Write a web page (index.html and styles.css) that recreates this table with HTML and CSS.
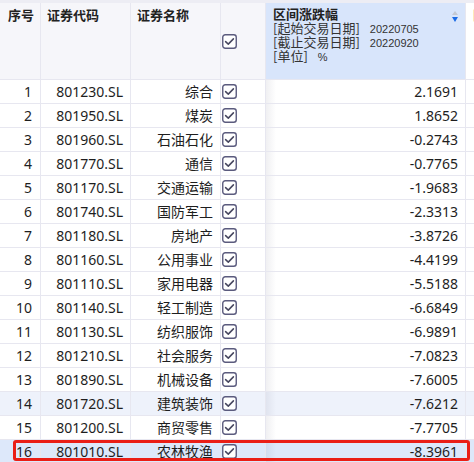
FILE: index.html
```html
<!DOCTYPE html>
<html lang="zh">
<head>
<meta charset="utf-8">
<link rel="stylesheet" href="styles.css">
</head>
<body>
<div class="sheet">
  <div class="row head">
    <div class="cell h">序号</div>
    <div class="cell h">证券代码</div>
    <div class="cell h">证券名称</div>
    <div class="cell chk hchk"><svg class="box" viewBox="0 0 15 15"><rect x="0.75" y="0.75" width="13.5" height="13.5" rx="2.5"/><polyline points="3.6,7.6 6.3,10.1 11.4,4.9"/></svg></div>
    <div class="cell hsel">
      <div class="ttl">区间涨跌幅</div>
      <div class="sub">[起始交易日期]<span class="num">20220705</span></div>
      <div class="sub">[截止交易日期]<span class="num">20220920</span></div>
      <div class="sub">[单位]<span class="num">%</span></div>
      <span class="sort up"></span><span class="sort down"></span>
    </div>
    <div class="cell h extra">区间涨跌幅</div>
  </div>
  <div class="rows">
    <div class="row"><div class="cell n">1</div><div class="cell n">801230.SL</div><div class="cell n">综合</div><div class="cell chk"><svg class="box" viewBox="0 0 15 15"><rect x="0.75" y="0.75" width="13.5" height="13.5" rx="2.5"/><polyline points="3.6,7.6 6.3,10.1 11.4,4.9"/></svg></div><div class="cell n val">2.1691</div><div class="cell"></div></div>
    <div class="row"><div class="cell n">2</div><div class="cell n">801950.SL</div><div class="cell n">煤炭</div><div class="cell chk"><svg class="box" viewBox="0 0 15 15"><rect x="0.75" y="0.75" width="13.5" height="13.5" rx="2.5"/><polyline points="3.6,7.6 6.3,10.1 11.4,4.9"/></svg></div><div class="cell n val">1.8652</div><div class="cell"></div></div>
    <div class="row"><div class="cell n">3</div><div class="cell n">801960.SL</div><div class="cell n">石油石化</div><div class="cell chk"><svg class="box" viewBox="0 0 15 15"><rect x="0.75" y="0.75" width="13.5" height="13.5" rx="2.5"/><polyline points="3.6,7.6 6.3,10.1 11.4,4.9"/></svg></div><div class="cell n val">-0.2743</div><div class="cell"></div></div>
    <div class="row"><div class="cell n">4</div><div class="cell n">801770.SL</div><div class="cell n">通信</div><div class="cell chk"><svg class="box" viewBox="0 0 15 15"><rect x="0.75" y="0.75" width="13.5" height="13.5" rx="2.5"/><polyline points="3.6,7.6 6.3,10.1 11.4,4.9"/></svg></div><div class="cell n val">-0.7765</div><div class="cell"></div></div>
    <div class="row"><div class="cell n">5</div><div class="cell n">801170.SL</div><div class="cell n">交通运输</div><div class="cell chk"><svg class="box" viewBox="0 0 15 15"><rect x="0.75" y="0.75" width="13.5" height="13.5" rx="2.5"/><polyline points="3.6,7.6 6.3,10.1 11.4,4.9"/></svg></div><div class="cell n val">-1.9683</div><div class="cell"></div></div>
    <div class="row"><div class="cell n">6</div><div class="cell n">801740.SL</div><div class="cell n">国防军工</div><div class="cell chk"><svg class="box" viewBox="0 0 15 15"><rect x="0.75" y="0.75" width="13.5" height="13.5" rx="2.5"/><polyline points="3.6,7.6 6.3,10.1 11.4,4.9"/></svg></div><div class="cell n val">-2.3313</div><div class="cell"></div></div>
    <div class="row"><div class="cell n">7</div><div class="cell n">801180.SL</div><div class="cell n">房地产</div><div class="cell chk"><svg class="box" viewBox="0 0 15 15"><rect x="0.75" y="0.75" width="13.5" height="13.5" rx="2.5"/><polyline points="3.6,7.6 6.3,10.1 11.4,4.9"/></svg></div><div class="cell n val">-3.8726</div><div class="cell"></div></div>
    <div class="row"><div class="cell n">8</div><div class="cell n">801160.SL</div><div class="cell n">公用事业</div><div class="cell chk"><svg class="box" viewBox="0 0 15 15"><rect x="0.75" y="0.75" width="13.5" height="13.5" rx="2.5"/><polyline points="3.6,7.6 6.3,10.1 11.4,4.9"/></svg></div><div class="cell n val">-4.4199</div><div class="cell"></div></div>
    <div class="row"><div class="cell n">9</div><div class="cell n">801110.SL</div><div class="cell n">家用电器</div><div class="cell chk"><svg class="box" viewBox="0 0 15 15"><rect x="0.75" y="0.75" width="13.5" height="13.5" rx="2.5"/><polyline points="3.6,7.6 6.3,10.1 11.4,4.9"/></svg></div><div class="cell n val">-5.5188</div><div class="cell"></div></div>
    <div class="row"><div class="cell n">10</div><div class="cell n">801140.SL</div><div class="cell n">轻工制造</div><div class="cell chk"><svg class="box" viewBox="0 0 15 15"><rect x="0.75" y="0.75" width="13.5" height="13.5" rx="2.5"/><polyline points="3.6,7.6 6.3,10.1 11.4,4.9"/></svg></div><div class="cell n val">-6.6849</div><div class="cell"></div></div>
    <div class="row"><div class="cell n">11</div><div class="cell n">801130.SL</div><div class="cell n">纺织服饰</div><div class="cell chk"><svg class="box" viewBox="0 0 15 15"><rect x="0.75" y="0.75" width="13.5" height="13.5" rx="2.5"/><polyline points="3.6,7.6 6.3,10.1 11.4,4.9"/></svg></div><div class="cell n val">-6.9891</div><div class="cell"></div></div>
    <div class="row"><div class="cell n">12</div><div class="cell n">801210.SL</div><div class="cell n">社会服务</div><div class="cell chk"><svg class="box" viewBox="0 0 15 15"><rect x="0.75" y="0.75" width="13.5" height="13.5" rx="2.5"/><polyline points="3.6,7.6 6.3,10.1 11.4,4.9"/></svg></div><div class="cell n val">-7.0823</div><div class="cell"></div></div>
    <div class="row"><div class="cell n">13</div><div class="cell n">801890.SL</div><div class="cell n">机械设备</div><div class="cell chk"><svg class="box" viewBox="0 0 15 15"><rect x="0.75" y="0.75" width="13.5" height="13.5" rx="2.5"/><polyline points="3.6,7.6 6.3,10.1 11.4,4.9"/></svg></div><div class="cell n val">-7.6005</div><div class="cell"></div></div>
    <div class="row hover"><div class="cell n">14</div><div class="cell n">801720.SL</div><div class="cell n">建筑装饰</div><div class="cell chk"><svg class="box" viewBox="0 0 15 15"><rect x="0.75" y="0.75" width="13.5" height="13.5" rx="2.5"/><polyline points="3.6,7.6 6.3,10.1 11.4,4.9"/></svg></div><div class="cell n val">-7.6212</div><div class="cell"></div></div>
    <div class="row"><div class="cell n">15</div><div class="cell n">801200.SL</div><div class="cell n">商贸零售</div><div class="cell chk"><svg class="box" viewBox="0 0 15 15"><rect x="0.75" y="0.75" width="13.5" height="13.5" rx="2.5"/><polyline points="3.6,7.6 6.3,10.1 11.4,4.9"/></svg></div><div class="cell n val">-7.7705</div><div class="cell"></div></div>
    <div class="row selected"><div class="cell n">16</div><div class="cell n">801010.SL</div><div class="cell n">农林牧渔</div><div class="cell chk"><svg class="box" viewBox="0 0 15 15"><rect x="0.75" y="0.75" width="13.5" height="13.5" rx="2.5"/><polyline points="3.6,7.6 6.3,10.1 11.4,4.9"/></svg></div><div class="cell n val">-8.3961</div><div class="cell"></div></div>
  </div>
  <div class="mark"></div>
</div>
</body>
</html>
```
FILE: styles.css
```css
html, body {
  margin: 0;
  padding: 0;
  background: #ffffff;
  overflow: hidden;
}
body {
  width: 474px;
  height: 462px;
  font-family: "Noto Sans", "Noto Sans CJK SC", sans-serif;
  font-size: 14px;
  color: #1e1e1e;
}
.sheet {
  position: relative;
  width: 520px;
}
.row {
  display: grid;
  grid-template-columns: 41px 90px 90px 45px 200px 54px;
  height: 24px;
}
.cell {
  border-right: 1px solid #e7e7f0;
  border-bottom: 1px solid #e7e7f0;
  box-sizing: border-box;
  overflow: hidden;
  white-space: nowrap;
}
.row.head {
  height: 80px;
  border-top: 3px solid #ededf4;
  box-sizing: border-box;
  background: #f6f6fa;
}
.h {
  font-family: "Noto Sans CJK SC", sans-serif;
  font-weight: 700;
  font-size: 13px;
  line-height: 14px;
  padding: 5px 0 0 6px;
  color: #222;
}
.row.head .cell:first-child { padding-left: 8px; }
.hchk { align-items: center; }
.hsel {
  position: relative;
  background: #d8e5fb;
  padding: 4px 0 0 7px;
  font-family: "Noto Sans CJK SC", sans-serif;
  font-size: 13px;
  line-height: 14px;
  color: #2a2a2a;
}
.ttl { font-weight: 700; color: #222; height: 14px; }
.sub { font-weight: 400; color: #333; height: 14px; }
.num {
  font-family: "Liberation Sans", sans-serif;
  font-size: 11px;
  margin-left: 10px;
}
.sort {
  position: absolute;
  left: 186px;
  width: 0;
  height: 0;
  border-left: 3.5px solid transparent;
  border-right: 3.5px solid transparent;
}
.sort.up { top: 8px; border-bottom: 4px solid #c3c8d2; }
.sort.down { top: 14px; border-top: 5px solid #1c6ce6; }
.extra { padding-left: 7px; background: #ffffff; }
.n {
  text-align: right;
  line-height: 23px;
  padding-right: 7px;
}
.row .n:first-child { padding-right: 8px; }
.chk {
  display: flex;
  align-items: center;
  padding-left: 1px;
}
.box {
  width: 15px;
  height: 15px;
  display: block;
}
.box rect {
  fill: #ffffff;
  stroke: #5b5b7e;
  stroke-width: 1.4;
}
.box polyline {
  fill: none;
  stroke: #46465f;
  stroke-width: 1.5;
  stroke-linecap: round;
  stroke-linejoin: round;
}
.rows .val {
  background-image: linear-gradient(to right, rgba(60, 60, 90, 0.08), rgba(60, 60, 90, 0) 10px);
}
.row.hover { background: #eef2fb; }
.row.selected { background: #dde8fa; }
.mark {
  position: absolute;
  left: 13px;
  top: 440px;
  width: 457px;
  height: 21px;
  border: 3px solid #ea1e16;
  border-radius: 3px;
  box-sizing: border-box;
}
```
